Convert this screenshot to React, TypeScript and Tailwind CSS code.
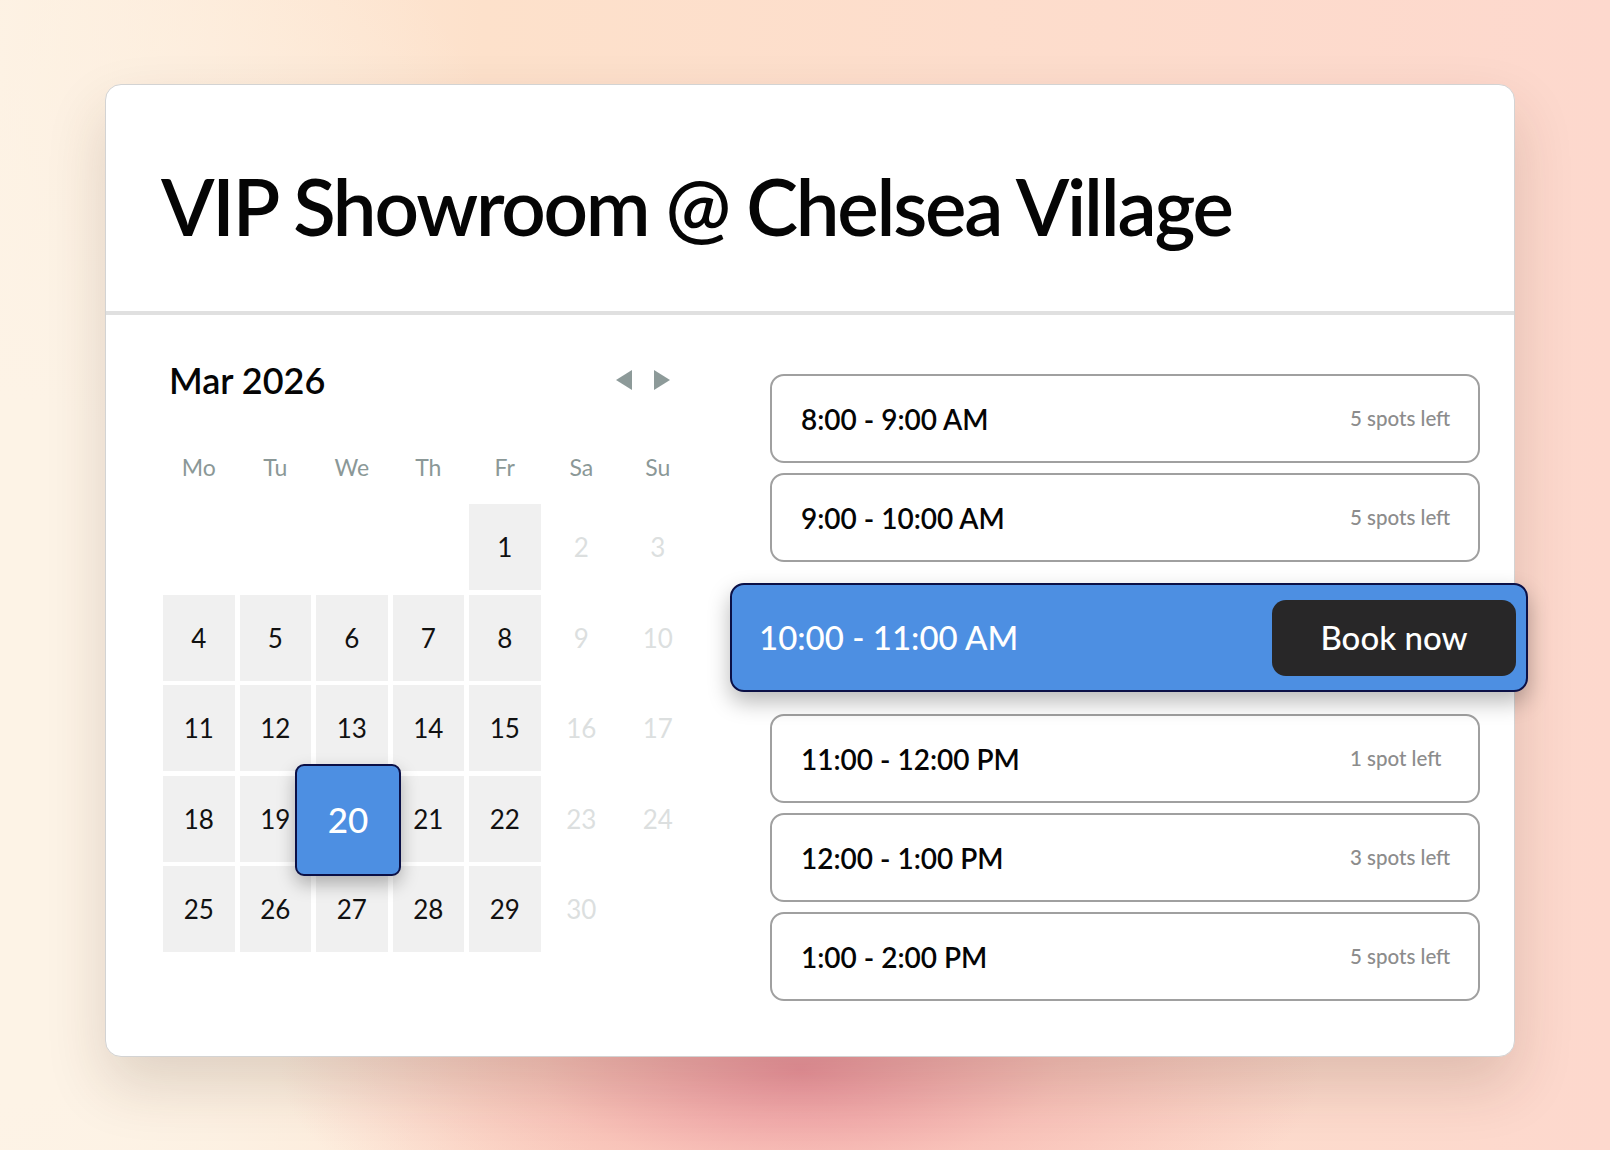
import React from "react";

type Day = { n?: number; kind: "empty" | "on" | "off" | "sel" };

const rows: Day[][] = [
  [
    { kind: "empty" },
    { kind: "empty" },
    { kind: "empty" },
    { kind: "empty" },
    { n: 1, kind: "on" },
    { n: 2, kind: "off" },
    { n: 3, kind: "off" },
  ],
  [4, 5, 6, 7, 8].map((n) => ({ n, kind: "on" as const })).concat([
    { n: 9, kind: "off" },
    { n: 10, kind: "off" },
  ]),
  [11, 12, 13, 14, 15].map((n) => ({ n, kind: "on" as const })).concat([
    { n: 16, kind: "off" },
    { n: 17, kind: "off" },
  ]),
  [
    { n: 18, kind: "on" },
    { n: 19, kind: "on" },
    { n: 20, kind: "sel" },
    { n: 21, kind: "on" },
    { n: 22, kind: "on" },
    { n: 23, kind: "off" },
    { n: 24, kind: "off" },
  ],
  [25, 26, 27, 28, 29].map((n) => ({ n, kind: "on" as const })).concat([
    { n: 30, kind: "off" },
    { kind: "empty" },
  ]),
];

const weekdays = ["Mo", "Tu", "We", "Th", "Fr", "Sa", "Su"];

const slots = [
  { t: "8:00 - 9:00 AM", s: "5 spots left" },
  { t: "9:00 - 10:00 AM", s: "5 spots left" },
  { t: "10:00 - 11:00 AM", s: "", sel: true },
  { t: "11:00 - 12:00 PM", s: "1 spot left" },
  { t: "12:00 - 1:00 PM", s: "3 spots left" },
  { t: "1:00 - 2:00 PM", s: "5 spots left" },
];

function Cell({ d }: { d: Day }) {
  if (d.kind === "empty") return <div className="h-[86px]" />;
  if (d.kind === "off")
    return (
      <div className="h-[86px] flex items-center justify-center text-[26px] leading-none text-[#dcdfdf]">
        {d.n}
      </div>
    );
  if (d.kind === "sel")
    return (
      <div className="relative h-[86px] bg-[#f0f0f0]">
        <div className="absolute left-[-21px] top-[-12px] w-[106px] h-[112px] z-10 flex items-center justify-center rounded-[9px] border-2 border-[#0b1046] bg-[#4d8fe2] text-white text-[35px] font-medium leading-none shadow-[0_8px_18px_rgba(0,0,0,0.28)]">
          {d.n}
        </div>
      </div>
    );
  return (
    <div className="h-[86px] flex items-center justify-center bg-[#f0f0f0] text-[26px] leading-none text-[#111]">
      {d.n}
    </div>
  );
}

export default function App() {
  return (
    <div
      className="w-[1610px] h-[1150px] overflow-hidden pt-[84px] pl-[105px] font-['Lato','Liberation_Sans',sans-serif] bg-[image:radial-gradient(ellipse_520px_200px_at_800px_1070px,#eb949d_0%,rgba(245,172,170,0.55)_50%,rgba(253,216,204,0)_100%),radial-gradient(ellipse_650px_1000px_at_0px_750px,#fdf3e6_0%,#fdf3e6_35%,rgba(253,243,230,0)_100%),linear-gradient(90deg,#fdf1e2_0%,#fde1cb_30%,#fdd8cd_100%)]"
    >
      <div className="w-[1410px] h-[973px] bg-white rounded-[16px] border border-[#d3d3d3] shadow-[0_28px_60px_rgba(70,40,20,0.16)] overflow-visible flex flex-col">
        <div className="h-[226px] pl-[55px] pt-[82px]">
          <h1 className="text-[78px] font-semibold leading-none text-[#050505] tracking-[-2.2px]">
            VIP Showroom @ Chelsea Village
          </h1>
        </div>
        <div className="h-[4px] bg-[#e0e0e0]" />
        <div className="flex pl-[57px] pr-[34px]">
          {/* Calendar */}
          <div className="w-[534px] pt-[47px]">
            <div className="h-[36px] flex items-center justify-between pl-[6px] pr-[27px]">
              <div className="text-[36px] font-semibold leading-none text-[#050505]">
                Mar 2026
              </div>
              <div className="flex items-center gap-[22px]">
                <svg width="16" height="20" viewBox="0 0 16 20">
                  <path d="M16 0 L16 20 L0 10 Z" fill="#8d9a99" />
                </svg>
                <svg width="16" height="20" viewBox="0 0 16 20">
                  <path d="M0 0 L0 20 L16 10 Z" fill="#8d9a99" />
                </svg>
              </div>
            </div>
            <div className="mt-[58px] grid grid-cols-[repeat(7,71.5px)] gap-x-[5px]">
              {weekdays.map((w) => (
                <div
                  key={w}
                  className="text-center text-[23px] leading-none text-[#8b9897]"
                >
                  {w}
                </div>
              ))}
            </div>
            <div className="mt-[25px] grid grid-cols-[repeat(7,71.5px)] gap-x-[5px] gap-y-[4.5px]">
              {rows.flat().map((d, i) => (
                <Cell key={i} d={d} />
              ))}
            </div>
          </div>
          {/* Slots */}
          <div className="ml-[73px] flex-1 pt-[59px] flex flex-col gap-[10px]">
            {slots.map((s) =>
              s.sel ? (
                <div
                  key={s.t}
                  className="mt-[11px] mb-[12px] ml-[-40px] mr-[-48px] h-[109px] rounded-[14px] border-2 border-[#0b1046] bg-[#4d8fe2] flex items-center justify-between pl-[27px] pr-[10px] shadow-[0_10px_22px_rgba(0,0,0,0.28)] relative z-10"
                >
                  <span className="text-white text-[33px] font-medium leading-none">
                    {s.t}
                  </span>
                  <button className="w-[244px] h-[76px] rounded-[14px] bg-[#282728] text-white text-[33px] font-medium leading-none flex items-center justify-center">
                    Book now
                  </button>
                </div>
              ) : (
                <div
                  key={s.t}
                  className="h-[89px] rounded-[14px] border-2 border-[#a0a0a0] bg-white flex items-center justify-between pl-[29px] pr-[27px]"
                >
                  <span className="text-[28px] font-semibold leading-none text-[#050505]">
                    {s.t}
                  </span>
                  <span className="w-[101px] text-left text-[20.5px] font-medium leading-none text-[#8c8c8c]">
                    {s.s}
                  </span>
                </div>
              )
            )}
          </div>
        </div>
      </div>
    </div>
  );
}
